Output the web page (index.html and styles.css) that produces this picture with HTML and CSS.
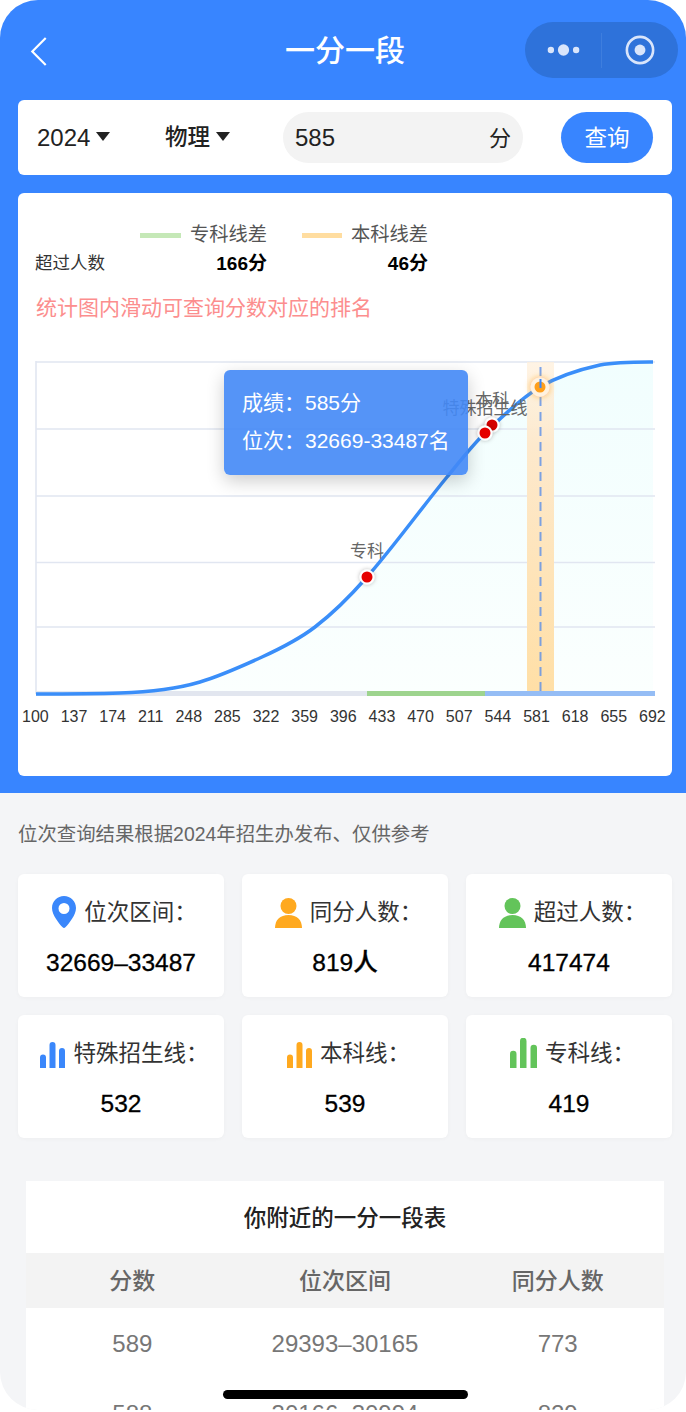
FILE: index.html
```html
<!DOCTYPE html>
<html lang="zh-CN">
<head>
<meta charset="utf-8">
<title>一分一段</title>
<link rel="stylesheet" href="styles.css">
</head>
<body>
<div class="phone">
  <section class="hero">
    <header class="nav">
      <svg class="back" viewBox="0 0 18 30" aria-hidden="true"><path d="M16 2 3 15l13 13" fill="none" stroke="#fff" stroke-width="2.1"/></svg>
      <h1 class="nav-title">一分一段</h1>
      <div class="capsule">
        <svg class="cap-dots" viewBox="0 0 34 12" aria-hidden="true"><circle cx="4" cy="6" r="3.300" fill="#d9e5fb"/><circle cx="17" cy="6" r="5.800" fill="#d9e5fb"/><circle cx="30" cy="6" r="3.300" fill="#d9e5fb"/></svg>
        <span class="cap-sep"></span>
        <svg class="cap-target" viewBox="0 0 32 32" aria-hidden="true"><circle cx="16" cy="16" r="14" fill="none" stroke="#d9e5fb" stroke-width="2.800"/><circle cx="16" cy="16" r="5.800" fill="#d9e5fb"/></svg>
      </div>
    </header>

    <div class="search card">
      <div class="select select-year">2024<i class="caret"></i></div>
      <div class="select select-subject">物理<i class="caret"></i></div>
      <div class="score-input"><span>585</span><span class="unit">分</span></div>
      <button class="query">查询</button>
    </div>

    <div class="chart-card card">
      <div class="legend-row">
        <span class="legend-label-spacer"></span>
        <span class="legend-item"><i class="swatch swatch-green"></i>专科线差</span>
        <span class="legend-item"><i class="swatch swatch-orange"></i>本科线差</span>
      </div>
      <div class="value-row">
        <span class="value-label">超过人数</span>
        <b class="value value-a">166分</b>
        <b class="value value-b">46分</b>
      </div>
      <p class="hint">统计图内滑动可查询分数对应的排名</p>

      <div class="chart">
        <svg class="plot" width="654" height="345" viewBox="18 355 654 345" aria-hidden="true">
          <defs>
            <linearGradient id="area" x1="0" y1="0" x2="0" y2="1">
              <stop offset="0" stop-color="#f1fefe"/>
              <stop offset="1" stop-color="#fbfffe"/>
            </linearGradient>
            <linearGradient id="band" x1="0" y1="0" x2="0" y2="1">
              <stop offset="0" stop-color="#fff0dc" stop-opacity=".75"/>
              <stop offset=".25" stop-color="#fde9cd"/>
              <stop offset="1" stop-color="#ffdfa6"/>
            </linearGradient>
            <filter id="soft" x="-50%" y="-50%" width="200%" height="200%"><feDropShadow dx="0" dy="0" stdDeviation="2" flood-color="#000" flood-opacity=".3"/></filter>
            <filter id="glow" x="-80%" y="-80%" width="260%" height="260%"><feDropShadow dx="0" dy="0" stdDeviation="3" flood-color="#ff9f1a" flood-opacity=".7"/></filter>
          </defs>
          <path d="M36 694C64 694 92 694 120 693C147 692.200 173 690 200 682C220.700 675.800 241.300 666.500 262 657C279.700 648.900 297.300 640.500 315 627C332.300 613.800 349.700 596.700 367 577C393.700 546.600 420.300 509.600 447 477C459.700 461.500 472.300 445.300 485 433C503.300 415.200 521.700 397.800 540 387C560 375.200 580 369.400 600 365C617 361.800 635 362 653 362V694Z" fill="url(#area)"/>
          <g class="grid">
            <line x1="36" y1="362" x2="655" y2="362"/>
            <line x1="36" y1="429" x2="655" y2="429"/>
            <line x1="36" y1="496" x2="655" y2="496"/>
            <line x1="36" y1="562.500" x2="655" y2="562.500"/>
            <line x1="36" y1="627" x2="655" y2="627"/>
            <line x1="36" y1="361" x2="36" y2="694"/>
          </g>
          <rect x="527" y="362" width="27" height="330" fill="url(#band)"/>
          <rect x="36" y="691" width="331" height="5" fill="#e2e6ef"/>
          <rect x="367" y="691" width="118" height="5" fill="#9ed48e"/>
          <rect x="485" y="691" width="170" height="5" fill="#95bdf5"/>
          <path d="M36 694C64 694 92 694 120 693C147 692.200 173 690 200 682C220.700 675.800 241.300 666.500 262 657C279.700 648.900 297.300 640.500 315 627C332.300 613.800 349.700 596.700 367 577C393.700 546.600 420.300 509.600 447 477C459.700 461.500 472.300 445.300 485 433C503.300 415.200 521.700 397.800 540 387C560 375.200 580 369.400 600 365C617 361.800 635 362 653 362" fill="none" stroke="#3a8ef9" stroke-width="3.500"/>
          <line class="cursor" x1="540.500" y1="367" x2="540.500" y2="694"/>
          <text class="mark" x="367" y="557" text-anchor="middle">专科</text>
          <text class="mark" x="492" y="406" text-anchor="middle">本科</text>
          <text class="mark" x="485" y="414" text-anchor="middle">特殊招生线</text>
          <circle cx="492" cy="425" r="6.500" fill="#d40000" stroke="#fff" stroke-width="2" filter="url(#soft)"/>
          <circle cx="485" cy="433" r="6.500" fill="#e60000" stroke="#fff" stroke-width="2" filter="url(#soft)"/>
          <circle cx="367" cy="577" r="6.500" fill="#e60000" stroke="#fff" stroke-width="2" filter="url(#soft)"/>
          <circle cx="540" cy="387" r="7.500" fill="#ff9f1a" stroke="#fff2e0" stroke-width="4" filter="url(#glow)"/>
          <line class="cursor-top" x1="540.500" y1="379" x2="540.500" y2="394"/>
        </svg>
        <div class="tooltip">
          <p>成绩：585分</p>
          <p>位次：32669-33487名</p>
        </div>
      </div>
      <div class="axis">
        <span>100</span><span>137</span><span>174</span><span>211</span><span>248</span><span>285</span><span>322</span><span>359</span><span>396</span><span>433</span><span>470</span><span>507</span><span>544</span><span>581</span><span>618</span><span>655</span><span>692</span>
      </div>
    </div>
  </section>

  <main class="content">
    <p class="note">位次查询结果根据2024年招生办发布、仅供参考</p>
    <div class="stats">
      <div class="stat">
        <div class="stat-head">
          <svg class="icon icon-pin" viewBox="0 0 24 32" aria-hidden="true"><path fill-rule="evenodd" d="M12 0C5.400 0 0 5.300 0 12c0 7 7 15.500 10.600 19.300a2 2 0 0 0 2.800 0C17 27.500 24 19 24 12 24 5.300 18.600 0 12 0Zm0 7a5.500 5.500 0 1 1 0 11 5.500 5.500 0 0 1 0-11Z" fill="#3a87fb"/></svg>
          <span>位次区间：</span>
        </div>
        <div class="stat-value">32669–33487</div>
      </div>
      <div class="stat">
        <div class="stat-head">
          <svg class="icon icon-person" viewBox="0 0 27 30" aria-hidden="true"><circle cx="13.500" cy="8" r="8" fill="#ffa91f"/><path d="M0 30c0-8 5-13 13.500-13S27 22 27 30Z" fill="#ffa91f"/></svg>
          <span>同分人数：</span>
        </div>
        <div class="stat-value">819人</div>
      </div>
      <div class="stat">
        <div class="stat-head">
          <svg class="icon icon-person" viewBox="0 0 27 30" aria-hidden="true"><circle cx="13.500" cy="8" r="8" fill="#63c45a"/><path d="M0 30c0-8 5-13 13.500-13S27 22 27 30Z" fill="#63c45a"/></svg>
          <span>超过人数：</span>
        </div>
        <div class="stat-value">417474</div>
      </div>
      <div class="stat">
        <div class="stat-head">
          <svg class="icon icon-bars" viewBox="0 0 25 26" aria-hidden="true"><path d="M0 15.500a3 3 0 0 1 6 0V26H0ZM9.500 3a3 3 0 0 1 6 0v23h-6ZM19 9a3 3 0 0 1 6 0v17h-6Z" fill="#3a87fb"/></svg>
          <span>特殊招生线：</span>
        </div>
        <div class="stat-value">532</div>
      </div>
      <div class="stat">
        <div class="stat-head">
          <svg class="icon icon-bars" viewBox="0 0 25 26" aria-hidden="true"><path d="M0 15.500a3 3 0 0 1 6 0V26H0ZM9.500 3a3 3 0 0 1 6 0v23h-6ZM19 9a3 3 0 0 1 6 0v17h-6Z" fill="#ffa91f"/></svg>
          <span>本科线：</span>
        </div>
        <div class="stat-value">539</div>
      </div>
      <div class="stat">
        <div class="stat-head">
          <svg class="icon icon-bars-tall" viewBox="0 0 27 30" aria-hidden="true"><path d="M0 16a3 3 0 0 1 6.500 0v14H0ZM10 3a3 3 0 0 1 6.500 0v27H10ZM20.500 10a3 3 0 0 1 6.500 0v20h-6.500Z" fill="#63c45a"/></svg>
          <span>专科线：</span>
        </div>
        <div class="stat-value">419</div>
      </div>
    </div>

    <section class="table">
      <h2 class="table-title">你附近的一分一段表</h2>
      <div class="tr th"><span>分数</span><span>位次区间</span><span>同分人数</span></div>
      <div class="tr"><span>589</span><span>29393–30165</span><span>773</span></div>
      <div class="tr"><span>588</span><span>30166–30994</span><span>829</span></div>
    </section>
  </main>
  <div class="home-bar"></div>
</div>
</body>
</html>
```
FILE: styles.css
```css
* { box-sizing: border-box; }
html, body { margin: 0; padding: 0; background: #fff; }
body { font-family: "Liberation Sans", "Noto Sans CJK SC", sans-serif; color: #222; }
p, h1, h2 { margin: 0; font-weight: normal; }

.phone {
  position: relative;
  width: 686px;
  height: 1410px;
  border-radius: 38px;
  overflow: hidden;
  background: #f4f5f7;
}

.hero {
  height: 793px;
  background: #3885ff;
  padding: 22px 14px 0 18px;
}

.nav {
  position: relative;
  width: 660px;
  height: 56px;
  display: flex;
  align-items: center;
  justify-content: flex-end;
}
.back { position: absolute; left: 11px; top: 14px; width: 19px; height: 31px; }
.nav-title {
  position: absolute;
  left: -18px;
  right: -12px;
  top: 11px;
  text-align: center;
  font-size: 30px;
  line-height: 36px;
  font-weight: 500;
  color: #fff;
}
.capsule {
  width: 153px;
  height: 56px;
  border-radius: 28px;
  background: #2e72da;
  display: flex;
  align-items: center;
}
.cap-dots { width: 33px; height: 12px; margin-left: 22px; }
.cap-sep { width: 1px; height: 35px; margin-left: 21px; background: #3e7ede; }
.cap-target { width: 30px; height: 30px; margin-left: 23px; }

.card { background: #fff; border-radius: 6px; width: 654px; }

.search {
  height: 75px;
  margin-top: 22px;
  display: flex;
  align-items: center;
  padding-left: 19px;
}
.select { display: flex; align-items: center; font-size: 24px; color: #222; line-height: 30px; }
.select-year { width: 128px; }
.select-subject { width: 118px; font-size: 22.500px; font-weight: 500; }
.caret {
  width: 0;
  height: 0;
  margin: -3px 0 0 6px;
  border-left: 7px solid transparent;
  border-right: 7px solid transparent;
  border-top: 9px solid #222;
}
.score-input {
  width: 240px;
  height: 51px;
  border-radius: 26px;
  background: #f3f3f3;
  display: flex;
  align-items: center;
  justify-content: space-between;
  padding: 0 12px;
  font-size: 24px;
  color: #222;
}
.unit { font-size: 22px; padding-bottom: 3px; }
.query {
  width: 92px;
  height: 51px;
  margin-left: 38px;
  border: 0;
  border-radius: 26px;
  background: #3885ff;
  color: #fff;
  font: inherit;
  font-size: 22.500px;
  padding: 0 0 4px;
}

.chart-card {
  height: 583px;
  margin-top: 18px;
  padding-top: 28px;
}
.legend-row { display: flex; height: 26px; padding-top: 2px; align-items: center; font-size: 19.250px; color: #555; }
.legend-label-spacer { width: 122px; }
.legend-item { display: flex; align-items: center; line-height: 24px; }
.legend-item + .legend-item { margin-left: 35px; }
.swatch { width: 41px; height: 5px; margin-right: 9px; }
.swatch-green { background: #c5e8b7; }
.swatch-orange { background: #ffdda0; width: 40px; }

.value-row { display: flex; align-items: center; height: 24px; margin-top: 2px; padding-left: 17px; }
.value-label { width: 70px; font-size: 17.500px; color: #333; white-space: nowrap; }
.value { font-size: 19px; font-weight: 700; color: #000; text-align: right; }
.value-a { width: 162px; }
.value-b { width: 161px; }

.hint { margin: 21px 0 0 18px; font-size: 21px; line-height: 28px; color: #fc8e8e; }

.chart { position: relative; height: 345px; margin-top: 33px; }
.plot { display: block; }
.grid line { stroke: #e1e6f1; stroke-width: 1.600; }
.cursor { stroke: #5d90e8; stroke-width: 2; stroke-dasharray: 9 6; opacity: .8; }
.cursor-top { stroke: #3a87fb; stroke-width: 2; stroke-dasharray: 9 6; }
.mark { font-size: 17px; fill: #666; font-family: "Liberation Sans", "Noto Sans CJK SC", sans-serif; }

.tooltip {
  position: absolute;
  left: 206px;
  top: 15px;
  width: 244px;
  height: 105px;
  padding: 14px 0 0 18px;
  border-radius: 6px;
  background: rgba(66, 136, 246, .9);
  box-shadow: 0 6px 18px rgba(0, 0, 0, .2);
  color: #fff;
  font-size: 21px;
  line-height: 38px;
  white-space: nowrap;
}

.axis {
  display: flex;
  justify-content: space-between;
  margin-top: 7px;
  padding: 0 6px 0 4px;
  font-size: 16px;
  line-height: 20px;
  color: #333;
}

.content { padding: 0 14px 0 18px; }
.note { padding-top: 29px; font-size: 19.400px; line-height: 24px; color: #666; white-space: nowrap; }

.stats {
  display: grid;
  grid-template-columns: repeat(3, 206px);
  grid-auto-rows: 123px;
  gap: 18px;
  margin-top: 28px;
}
.stat {
  background: #fff;
  border-radius: 6px;
  box-shadow: 0 1px 4px rgba(0, 0, 0, .03);
  display: flex;
  flex-direction: column;
  align-items: center;
  padding-top: 20px;
}
.stat-head {
  display: flex;
  align-items: center;
  height: 36px;
  font-size: 22.500px;
  color: #333;
  white-space: nowrap;
}
.stat-head span { margin: 0 -7px 5px 0; }
.icon { flex: none; margin-right: 8px; }
.icon-pin { width: 24px; height: 32px; }
.icon-person { width: 27px; height: 30px; margin-top: 2px; }
.icon-bars { width: 25px; height: 26px; margin-top: 4px; }
.icon-bars-tall { width: 27px; height: 30px; }
.stat-value {
  margin-top: 18px;
  font-size: 24.500px;
  line-height: 30px;
  font-weight: 500;
  color: #000;
  -webkit-text-stroke: .3px #000;
}

.table { margin: 43px 8px 0 8px; width: 638px; background: #fff; }
.table-title {
  height: 72px;
  line-height: 76px;
  text-align: center;
  font-size: 22.500px;
  font-weight: 500;
  color: #222;
}
.tr {
  display: grid;
  grid-template-columns: repeat(3, 1fr);
  height: 70px;
  padding-top: 2px;
  align-items: center;
  text-align: center;
  font-size: 24px;
  color: #777;
}
.th { height: 55px; padding: 0 0 4px; background: #f3f3f3; color: #666; font-size: 23px; font-weight: 500; }

.home-bar {
  position: absolute;
  left: 223px;
  top: 1390px;
  width: 245px;
  height: 9px;
  border-radius: 5px;
  background: #000;
}
```
